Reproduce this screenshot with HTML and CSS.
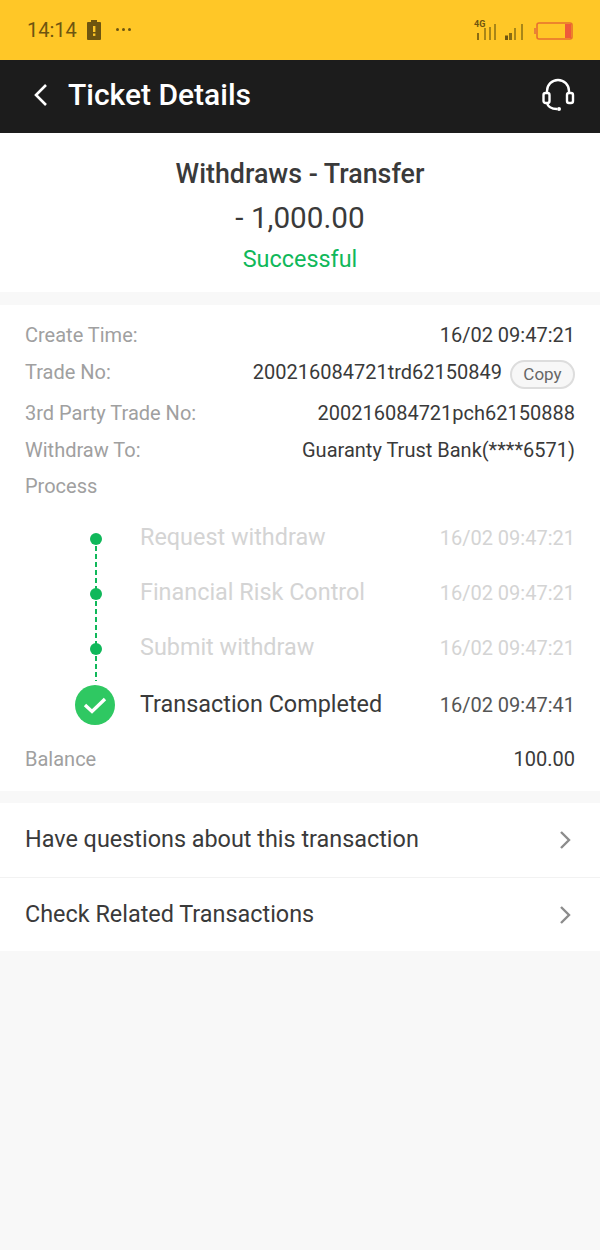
FILE: index.html
```html
<!DOCTYPE html>
<html lang="en">
<head>
    <meta charset="UTF-8">
    <meta name="viewport" content="width=device-width, initial-scale=1.0">
    <title>Ticket Details</title>
    <link rel="stylesheet" href="styles.css">
</head>
<body>
    <div class="status-bar">
        <div class="status-left">
            <span class="clock">14:14</span>
            <svg class="batt-alert" width="16" height="20" viewBox="0 0 16 20">
                <path d="M5 0h6v2h3a1 1 0 0 1 1 1v16a1 1 0 0 1-1 1H2a1 1 0 0 1-1-1V3a1 1 0 0 1 1-1h3z" fill="#6e5510"/>
                <rect x="7" y="6" width="2.4" height="6" fill="#ffc727"/>
                <rect x="7" y="13.5" width="2.4" height="2.4" fill="#ffc727"/>
            </svg>
            <span class="dots"><i></i><i></i><i></i></span>
        </div>
        <div class="status-right">
            <svg class="sig-one" width="24" height="20" viewBox="0 0 24 20">
                <text x="0" y="7" class="net-label">4G</text>
                <rect x="3" y="13" width="2" height="7" fill="#8a6c12"/>
                <rect x="10" y="8" width="2" height="12" fill="#a88618"/>
                <rect x="15" y="7" width="2" height="13" fill="#a88618"/>
                <rect x="20" y="4" width="2" height="16" fill="#a88618"/>
            </svg>
            <svg class="sig-two" width="19" height="20" viewBox="0 0 19 20">
                <rect x="1" y="15.5" width="3" height="4.5" fill="#6e5510"/>
                <rect x="5" y="13" width="3" height="7" fill="#8a6c12"/>
                <rect x="10" y="8" width="2" height="12" fill="#a88618"/>
                <rect x="17" y="4" width="2" height="16" fill="#a88618"/>
            </svg>
            <svg width="39" height="18" viewBox="0 0 39 18">
                <rect x="0" y="6" width="2" height="6" fill="#e8823a"/>
                <rect x="3" y="1" width="35" height="16" rx="2" fill="none" stroke="#e8702f" stroke-width="1.6"/>
                <rect x="31" y="2" width="6" height="14" fill="#ee5a3a"/>
            </svg>
        </div>
    </div>

    <div class="nav-bar">
        <svg class="back" width="16" height="24" viewBox="0 0 16 24">
            <path d="M13 2 3 12l10 10" fill="none" stroke="#fff" stroke-width="2.6"/>
        </svg>
        <h1>Ticket Details</h1>
        <svg class="support" width="34" height="34" viewBox="0 0 34 34">
            <path d="M6 16v-3a11 11 0 0 1 22 0v3" fill="none" stroke="#fff" stroke-width="2.4"/>
            <rect x="2.5" y="15" width="6" height="10" rx="2" fill="#1c1c1c" stroke="#fff" stroke-width="2.4"/>
            <rect x="26" y="15" width="6" height="10" rx="2" fill="#1c1c1c" stroke="#fff" stroke-width="2.4"/>
            <path d="M6 25c1 4 5 6 10 6" fill="none" stroke="#fff" stroke-width="2.4"/>
            <circle cx="18" cy="31" r="2" fill="#fff"/>
        </svg>
    </div>

    <div class="summary">
        <div class="summary-title">Withdraws - Transfer</div>
        <div class="summary-amount">- 1,000.00</div>
        <div class="summary-status">Successful</div>
    </div>

    <div class="details">
        <div class="row row-time">
            <span class="label">Create Time:</span>
            <span class="value">16/02 09:47:21</span>
        </div>
        <div class="row row-trade">
            <span class="label">Trade No:</span>
            <span class="value">200216084721trd62150849<span class="copy">Copy</span></span>
        </div>
        <div class="row row-third">
            <span class="label">3rd Party Trade No:</span>
            <span class="value">200216084721pch62150888</span>
        </div>
        <div class="row row-bank">
            <span class="label">Withdraw To:</span>
            <span class="value">Guaranty Trust Bank(****6571)</span>
        </div>
        <div class="label process-label">Process</div>

        <div class="process">
            <div class="step">
                <div class="marker"><span class="dot"></span></div>
                <span class="step-name">Request withdraw</span>
                <span class="step-time">16/02 09:47:21</span>
            </div>
            <div class="step">
                <div class="marker"><span class="dot"></span></div>
                <span class="step-name">Financial Risk Control</span>
                <span class="step-time">16/02 09:47:21</span>
            </div>
            <div class="step">
                <div class="marker"><span class="dot"></span></div>
                <span class="step-name">Submit withdraw</span>
                <span class="step-time">16/02 09:47:21</span>
            </div>
            <div class="step step-done">
                <div class="marker">
                    <svg width="40" height="40" viewBox="0 0 40 40">
                        <circle cx="20" cy="20" r="20" fill="#2fc862"/>
                        <path d="M10 20l7 6.5L30 14" fill="none" stroke="#fff" stroke-width="3.4"/>
                    </svg>
                </div>
                <span class="step-name">Transaction Completed</span>
                <span class="step-time">16/02 09:47:41</span>
            </div>
        </div>

        <div class="row row-balance">
            <span class="label">Balance</span>
            <span class="value">100.00</span>
        </div>
    </div>

    <div class="links">
        <div class="link-row">
            <span>Have questions about this transaction</span>
            <svg width="12" height="20" viewBox="0 0 12 20"><path d="M2 2l8 8-8 8" fill="none" stroke="#8c8c8c" stroke-width="2.4"/></svg>
        </div>
        <div class="link-row">
            <span>Check Related Transactions</span>
            <svg width="12" height="20" viewBox="0 0 12 20"><path d="M2 2l8 8-8 8" fill="none" stroke="#8c8c8c" stroke-width="2.4"/></svg>
        </div>
    </div>
</body>
</html>
```

FILE: styles.css
```css
body {
    font-family: Roboto, "Liberation Sans", sans-serif;
    margin: 0;
    padding: 0;
    background-color: #f8f8f8;
    color: #3a3a3a;
}

.status-bar {
    height: 60px;
    background-color: #ffc727;
    display: flex;
    justify-content: space-between;
    align-items: center;
    padding: 0 27px;
}

.status-left {
    display: flex;
    align-items: center;
    color: #6e5510;
}

.clock {
    font-size: 20px;
}

.batt-alert {
    margin-left: 9px;
}

.dots {
    display: flex;
    gap: 3px;
    margin-left: 14px;
    margin-bottom: 2px;
}

.dots i {
    width: 3px;
    height: 3px;
    border-radius: 50%;
    background-color: #6e5510;
}

.status-right {
    display: flex;
    align-items: flex-end;
    height: 20px;
}

.sig-one {
    margin-right: 6px;
}

.sig-two {
    margin-right: 11px;
}

.net-label {
    font-size: 9px;
    font-weight: 700;
    fill: #6e5510;
}

.nav-bar {
    height: 73px;
    box-sizing: border-box;
    background-color: #1c1c1c;
    display: flex;
    align-items: center;
    padding: 0 25px 4px 33px;
}

.back {
    margin-right: 19px;
}

.nav-bar h1 {
    margin: 0;
    flex: 1;
    font-size: 30px;
    font-weight: 500;
    color: #fff;
}

.summary {
    background-color: #fff;
    height: 159px;
    text-align: center;
    box-sizing: border-box;
    padding-top: 25px;
}

.summary-title {
    font-size: 26.8px;
    font-weight: 500;
    line-height: 32px;
}

.summary-amount {
    font-size: 29.7px;
    line-height: 36px;
    margin-top: 10px;
}

.summary-status {
    font-size: 23.4px;
    line-height: 30px;
    color: #10b85a;
    margin-top: 8px;
}

.details {
    background-color: #fff;
    margin-top: 13px;
    padding: 0 25px;
    height: 486px;
    box-sizing: border-box;
}

.row {
    display: flex;
    justify-content: space-between;
    align-items: center;
    font-size: 20px;
}

.row-time {
    height: 60px;
}

.row-trade {
    height: 28px;
    margin-top: -7px;
}

.row-third {
    height: 28px;
    margin-top: 13px;
}

.row-bank {
    height: 28px;
    margin-top: 9px;
}

.row-balance {
    height: 28px;
    margin-top: 11px;
}

.label {
    color: #a0a0a0;
}

.value {
    display: flex;
    align-items: center;
}

.copy {
    font-size: 17px;
    color: #666;
    background-color: #f7f7f7;
    border: 2px solid #ddd;
    border-radius: 15px;
    width: 61px;
    height: 25px;
    display: flex;
    justify-content: center;
    align-items: center;
    margin: 4px 0 0 8px;
}

.process-label {
    font-size: 20px;
    line-height: 28px;
    margin-top: 8px;
}

.process {
    margin-top: 10px;
}

.step {
    display: flex;
    align-items: center;
    height: 55px;
    padding-left: 50px;
    position: relative;
}

.step-done {
    height: 59px;
}

/* dashed line between the dots */
.step:not(.step-done)::after {
    content: "";
    position: absolute;
    left: 70px;
    top: 28px;
    width: 2px;
    height: 55px;
    background: repeating-linear-gradient(to bottom, #10b85a 0, #10b85a 5px, transparent 5px, transparent 8px);
}

.step:nth-child(3)::after {
    height: 33px;
}

.marker {
    width: 40px;
    height: 40px;
    display: flex;
    justify-content: center;
    align-items: center;
    margin-right: 25px;
    flex-shrink: 0;
}

.dot {
    width: 12px;
    height: 12px;
    border-radius: 50%;
    background-color: #10b85a;
    position: relative;
    z-index: 1;
    margin: 2px 0 0 1px;
}

.marker svg {
    position: relative;
    z-index: 1;
}

.step-name {
    flex: 1;
    font-size: 23.4px;
    color: #d4d4d4;
    margin-bottom: 2px;
}

.step-time {
    font-size: 20px;
    color: #d4d4d4;
}

.step-done .step-name {
    color: #3a3a3a;
}

.step-done .step-time {
    color: #555;
}

.links {
    margin-top: 12px;
    background-color: #fff;
}

.link-row {
    height: 75px;
    display: flex;
    justify-content: space-between;
    align-items: center;
    padding: 0 29px 3px 25px;
    font-size: 23.4px;
    border-bottom: 1px solid #f2f2f2;
    box-sizing: border-box;
}

.link-row:last-child {
    height: 73px;
    padding-bottom: 2px;
    border-bottom: none;
}

.link-row svg {
    margin-top: 3px;
}
```
